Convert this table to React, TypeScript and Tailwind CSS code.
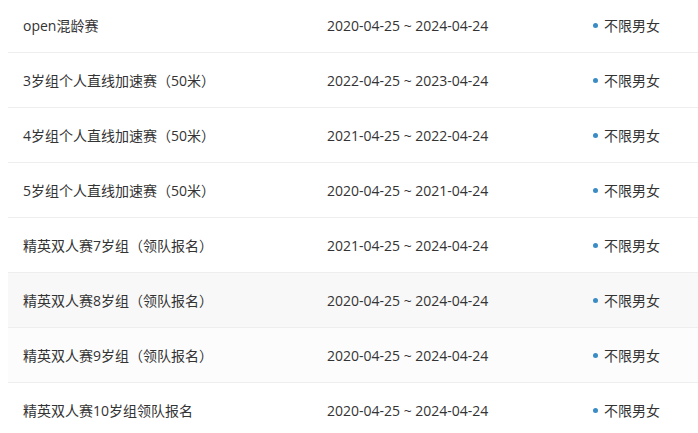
import React from 'react';

const rows = [
  { name: 'open混龄赛', range: '2020-04-25 ~ 2024-04-24' },
  { name: '3岁组个人直线加速赛（50米）', range: '2022-04-25 ~ 2023-04-24' },
  { name: '4岁组个人直线加速赛（50米）', range: '2021-04-25 ~ 2022-04-24' },
  { name: '5岁组个人直线加速赛（50米）', range: '2020-04-25 ~ 2021-04-24' },
  { name: '精英双人赛7岁组（领队报名）', range: '2021-04-25 ~ 2024-04-24' },
  { name: '精英双人赛8岁组（领队报名）', range: '2020-04-25 ~ 2024-04-24', bg: 'bg-[#f8f8f8]' },
  { name: '精英双人赛9岁组（领队报名）', range: '2020-04-25 ~ 2024-04-24', bg: 'bg-[#fcfcfc]' },
  { name: '精英双人赛10岁组领队报名', range: '2020-04-25 ~ 2024-04-24' },
];

export default function App() {
  return (
    <div
      className="w-[698px] h-[433px] overflow-hidden bg-white pl-2 text-[14px] text-[#333]"
      style={{ fontFamily: '"Open Sans", "Noto Sans CJK SC", sans-serif' }}
    >
      <div className="-mt-[2px]">
        {rows.map((r, i) => (
          <div
            key={i}
            className={`flex items-center h-[55px] border-b border-[#eeeeee] ${r.bg ?? ''}`}
          >
            <div className="w-[319px] pl-[15px] truncate">{r.name}</div>
            <div className="w-[266px]">{r.range}</div>
            <div className="flex items-center gap-[6px]">
              <span className="w-[5px] h-[5px] rounded-full bg-[#3b8bc5]" />
              <span>不限男女</span>
            </div>
          </div>
        ))}
      </div>
    </div>
  );
}
